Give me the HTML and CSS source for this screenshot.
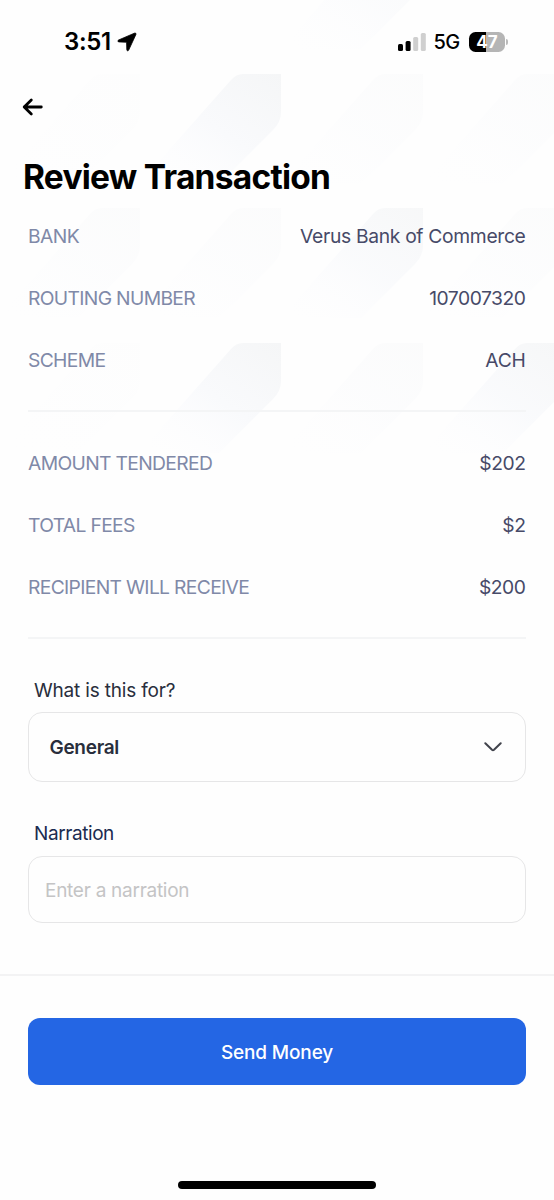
FILE: index.html
```html
<!DOCTYPE html>
<html lang="en">
<head>
<meta charset="utf-8">
<title>Review Transaction</title>
<link rel="stylesheet" href="styles.css">
</head>
<body>
<div class="screen">
  <svg class="pattern" width="554" height="480" viewBox="0 0 554 480" aria-hidden="true">
    <defs>
      <linearGradient id="fade" x1="1" y1="0" x2="0.1" y2="1">
        <stop offset="0" stop-color="#f5f6f7"/>
        <stop offset="0.5" stop-color="#f9fafc"/>
        <stop offset="1" stop-color="#fdfdff" stop-opacity="0"/>
      </linearGradient>
      <path id="band" d="M-38 0H0V38Q0 48-8 56L-62 110H-142L-50 6Q-45 0-38 0Z" fill="url(#fade)"/>
    </defs>
    <use href="#band" x="423" y="-61" opacity=".6"/>
    <use href="#band" x="140" y="74" opacity=".12"/>
    <use href="#band" x="281" y="74"/>
    <use href="#band" x="423" y="74" opacity=".3"/>
    <use href="#band" x="565" y="74" opacity=".3"/>
    <use href="#band" x="140" y="208" opacity=".3"/>
    <use href="#band" x="281" y="208" opacity=".3"/>
    <use href="#band" x="423" y="208" opacity=".8"/>
    <use href="#band" x="565" y="208" opacity=".3"/>
    <use href="#band" x="140" y="343" opacity=".1"/>
    <use href="#band" x="281" y="343"/>
    <use href="#band" x="423" y="343" opacity=".35"/>
    <use href="#band" x="565" y="343" opacity=".9"/>
  </svg>

  <header class="status">
    <div class="status-left">
      <span class="time">3:51</span>
      <svg class="location" width="20" height="20" viewBox="0 0 20 20"><path d="M17.4 1.2 1.6 8C.4 8.6.7 9.8 1.9 9.9L9 10.2Q9.6 10.2 9.6 10.8L9.8 17.7C9.8 19 11.2 19.2 11.7 18.1L18.9 2.5C19.3 1.5 18.5.7 17.4 1.2Z"/></svg>
    </div>
    <div class="status-right">
      <svg class="signal" width="28" height="18" viewBox="0 0 28 18">
        <rect x="0" y="11" width="5" height="7" rx="1.5"/>
        <rect x="7.6" y="8" width="5" height="10" rx="1.5"/>
        <rect class="weak" x="15.2" y="4" width="5" height="14" rx="1.5"/>
        <rect class="weak" x="22.8" y="0" width="5" height="18" rx="1.5"/>
      </svg>
      <span class="network">5G</span>
      <div class="battery"><span>47</span></div>
      <i class="battery-tip"></i>
    </div>
  </header>

  <main>
    <svg class="back" width="22" height="20" viewBox="0 0 22 20"><path d="M19.3 10H2.2M9.3 2.9 2.2 10l7.1 7.1"/></svg>
    <h1><span>Review Transaction</span></h1>

    <dl class="rows">
      <div class="row"><dt class="short">BANK</dt><dd class="bank-name">Verus Bank of Commerce</dd></div>
      <div class="row"><dt>ROUTING NUMBER</dt><dd class="digits">107007320</dd></div>
      <div class="row"><dt>SCHEME</dt><dd class="scheme">ACH</dd></div>
    </dl>
    <dl class="rows amounts">
      <div class="row"><dt>AMOUNT TENDERED</dt><dd class="digits">$202</dd></div>
      <div class="row"><dt>TOTAL FEES</dt><dd class="digits">$2</dd></div>
      <div class="row"><dt>RECIPIENT WILL RECEIVE</dt><dd class="digits">$200</dd></div>
    </dl>

    <div class="form">
      <div class="label purpose">What is this for?</div>
      <div class="select">
        <span>General</span>
        <svg width="18" height="10" viewBox="0 0 18 10"><path d="M1.3 1.2 8 7.8Q9 8.7 10 7.8L16.7 1.2"/></svg>
      </div>
      <div class="label narration">Narration</div>
      <div class="input"><span>Enter a narration</span></div>
    </div>
  </main>

  <footer>
    <button><span>Send Money</span></button>
    <div class="home"></div>
  </footer>
</div>
</body>
</html>
```

FILE: styles.css
```css
* { box-sizing: border-box; margin: 0; padding: 0; }
body { background: #fefefe; font-family: Inter, "Liberation Sans", sans-serif; }
.screen { position: relative; width: 554px; height: 1200px; display: flex; flex-direction: column; overflow: hidden; }
.pattern { position: absolute; top: 0; left: 0; z-index: -1; }

.status { display: flex; justify-content: space-between; align-items: center; height: 84px; padding: 0 46px 0 64px; }
.status-left, .status-right { display: flex; align-items: center; }
.time { font-size: 24px; font-weight: 600; letter-spacing: -.3px; line-height: 28px; }
.location { margin-left: 6px; stroke: #000; stroke-width: .8; }
.weak { fill: #cfcfcf; }
.network { font-size: 20px; font-weight: 500; line-height: 24px; margin-left: 8px; letter-spacing: -.7px; }
.battery { width: 36px; height: 20px; margin-left: 9.5px; border-radius: 6.5px; background: linear-gradient(90deg, #000 47%, #b5b5b5 47%); color: #fff; font-size: 17px; font-weight: 700; line-height: 20px; text-align: center; }
.battery-tip { width: 2px; height: 6px; margin-left: 1px; border-radius: 0 2px 2px 0; background: #bbb; }

main { flex: 1; }
.back { display: block; margin: 13px 0 0 22px; fill: none; stroke: #000; stroke-width: 2.8; stroke-linecap: round; stroke-linejoin: round; }
h1 { margin: 40px 0 0 23px; font-size: 33.5px; font-weight: 700; line-height: 40px; letter-spacing: -.75px; white-space: nowrap; }
.rows { margin: 8px 28px 0; border-bottom: 2px solid #f4f5f6; padding-bottom: 19px; }
.row { display: flex; justify-content: space-between; align-items: center; height: 62px; padding-right: .5px; font-size: 19.3px; white-space: nowrap; }
dt { color: #8089a8; letter-spacing: -.67px; }
dt.short { letter-spacing: -.6px; }
dd { color: #474a68; }
.bank-name { letter-spacing: -.33px; }
.digits { letter-spacing: -.48px; }
.scheme { letter-spacing: -.3px; }
.amounts { margin-top: 20px; }

.form { margin: 39px 28px 0; }
.label { padding-left: 6px; font-size: 19px; line-height: 26px; color: #292e3c; letter-spacing: -.18px; }
.select, .input { display: flex; align-items: center; border: 1.5px solid #e6e6e7; border-radius: 14px; background: #fefefe; }
.select { height: 70px; margin-top: 8px; padding: 0 23px 0 20.5px; justify-content: space-between; font-size: 19px; font-weight: 600; letter-spacing: -.3px; color: #292e3c; }
.select svg { fill: none; stroke: #41434c; stroke-width: 2; stroke-linecap: round; }
.narration { margin-top: 39px; color: #1b2b50; letter-spacing: -.42px; }
.input { height: 67px; margin-top: 9px; padding: 1px 0 0 16px; font-size: 19px; color: #c4c4c5; letter-spacing: -.27px; }

footer { height: 226px; padding: 42px 28px 0; border-top: 2px solid #f3f3f4; background: #fefefe; }
button { display: block; width: 498px; height: 67px; border: 0; border-radius: 12px; background: #2466e4; color: #fff; font: 500 19px/68px Inter, sans-serif; letter-spacing: -.15px; padding-top: 1px; }
.home { width: 198px; height: 8px; margin: 96px auto 0; border-radius: 4px; background: #000; }
```
